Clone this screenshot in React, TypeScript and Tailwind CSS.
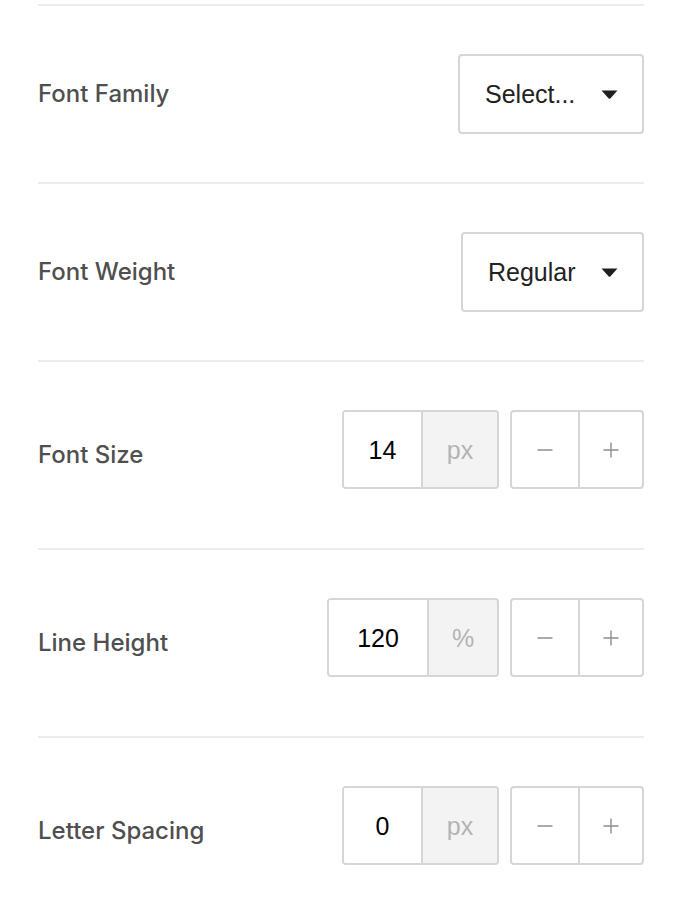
const label = "font-['Inter',sans-serif] text-[24px] font-medium leading-[32px] text-[#4f4f4f]";
const ctrl = "font-['Liberation_Sans',Arial,sans-serif] text-[25px] leading-[30px]";

function Caret() {
  return (
    <svg width="17" height="9" viewBox="0 0 17 9" aria-hidden>
      <path d="M0.5 0.5 L16.5 0.5 L9.5 8.2 Q8.5 9.2 7.5 8.2 Z" fill="#1f1f1f" />
    </svg>
  );
}

function SelectBox({ value, width }: { value: string; width: string }) {
  return (
    <div
      className={`${ctrl} ${width} flex h-[80px] items-center justify-between rounded-[4px] border-2 border-[#d6d6d6] bg-white pl-[25px] pr-[24px] text-[#222]`}
    >
      <span>{value}</span>
      <Caret />
    </div>
  );
}

function Minus() {
  return (
    <svg width="16" height="16" viewBox="0 0 16 16" aria-hidden>
      <path d="M0.5 8 H15.5" stroke="#8e8e8e" strokeWidth="1.4" />
    </svg>
  );
}

function Plus() {
  return (
    <svg width="16" height="16" viewBox="0 0 16 16" aria-hidden>
      <path d="M0.5 8 H15.5 M8 0.5 V15.5" stroke="#8e8e8e" strokeWidth="1.4" />
    </svg>
  );
}

type NumProps = { value: string; unit: string; valueW: string; unitW: string };

function NumberField({ value, unit, valueW, unitW }: NumProps) {
  return (
    <div className="mb-[11px] flex items-center gap-[11px]">
      <div className={`${ctrl} flex h-[79px] overflow-hidden rounded-[4px] border-2 border-[#d6d6d6]`}>
        <div className={`${valueW} flex items-center justify-center bg-white text-black`}>{value}</div>
        <div className={`${unitW} flex items-center justify-center border-l-2 border-[#d6d6d6] bg-[#f3f3f3] text-[#b3b3b3]`}>
          {unit}
        </div>
      </div>
      <div className="flex h-[79px] overflow-hidden rounded-[4px] border-2 border-[#d6d6d6] bg-white">
        <button className="flex w-[66px] items-center justify-center">
          <Minus />
        </button>
        <button className="flex w-[64px] items-center justify-center border-l-2 border-[#d6d6d6]">
          <Plus />
        </button>
      </div>
    </div>
  );
}

function Row({ title, children }: { title: string; children: React.ReactNode }) {
  return (
    <div className="flex items-center justify-between border-t-2 border-[#ececec] py-[48px]">
      <span className={label}>{title}</span>
      {children}
    </div>
  );
}

export default function App() {
  return (
    <div className="min-h-[912px] bg-white pl-[38px] pr-[38px] pt-[4px]">
      <Row title="Font Family">
        <SelectBox value="Select..." width="w-[186px]" />
      </Row>
      <Row title="Font Weight">
        <SelectBox value="Regular" width="w-[183px]" />
      </Row>
      <Row title="Font Size">
        <NumberField value="14" unit="px" valueW="w-[77px]" unitW="w-[76px]" />
      </Row>
      <Row title="Line Height">
        <NumberField value="120" unit="%" valueW="w-[98px]" unitW="w-[70px]" />
      </Row>
      <Row title="Letter Spacing">
        <NumberField value="0" unit="px" valueW="w-[77px]" unitW="w-[76px]" />
      </Row>
    </div>
  );
}
